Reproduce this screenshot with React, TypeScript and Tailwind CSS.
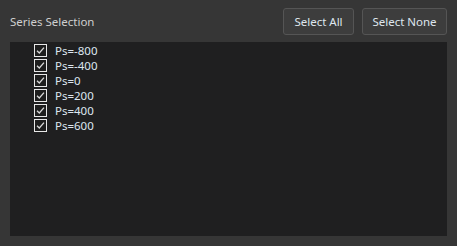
import React from 'react';

const series = ['Ps=-800', 'Ps=-400', 'Ps=0', 'Ps=200', 'Ps=400', 'Ps=600'];

function CheckBox() {
    return (
        <svg width="13" height="13" viewBox="0 0 13 13" className="shrink-0">
            <rect x="0.5" y="0.5" width="12" height="12" fill="#1e1e1e" stroke="#e8e8e8" strokeWidth="1" />
            <path d="M3 6.8 L5.3 9 L10 3.6" fill="none" stroke="#d8d8d8" strokeWidth="1.3" />
        </svg>
    );
}

export default function App() {
    return (
        <div
            className="w-[457px] h-[246px] bg-[#363636] flex flex-col px-[10px] pt-[8px] pb-[10px] text-[12px] text-[#d0d0d0]"
            style={{ fontFamily: '"Noto Sans", "Open Sans", sans-serif' }}
        >
            {/* Header */}
            <div className="flex items-center h-[27px]">
                <span className="flex-1 text-[11.5px] text-[#cfcfcf]">Series Selection</span>
                <button className="w-[71px] h-[27px] rounded-[3px] bg-[#3d3d3d] border border-[#555555] text-[#dfe6ee] text-[11.5px]">
                    Select All
                </button>
                <button className="ml-[8px] w-[85px] h-[27px] rounded-[3px] bg-[#3d3d3d] border border-[#555555] text-[#dfe6ee] text-[11.5px]">
                    Select None
                </button>
            </div>

            {/* List */}
            <div className="mt-[7px] flex-1 bg-[#1f1f20] pl-[24px] pt-[1px] flex flex-col">
                {series.map((s) => (
                    <div key={s} className="flex items-center h-[15px] gap-[8px]">
                        <CheckBox />
                        <span className="text-[11.5px] text-[#dde6f0] leading-[15px]">{s}</span>
                    </div>
                ))}
            </div>
        </div>
    );
}
